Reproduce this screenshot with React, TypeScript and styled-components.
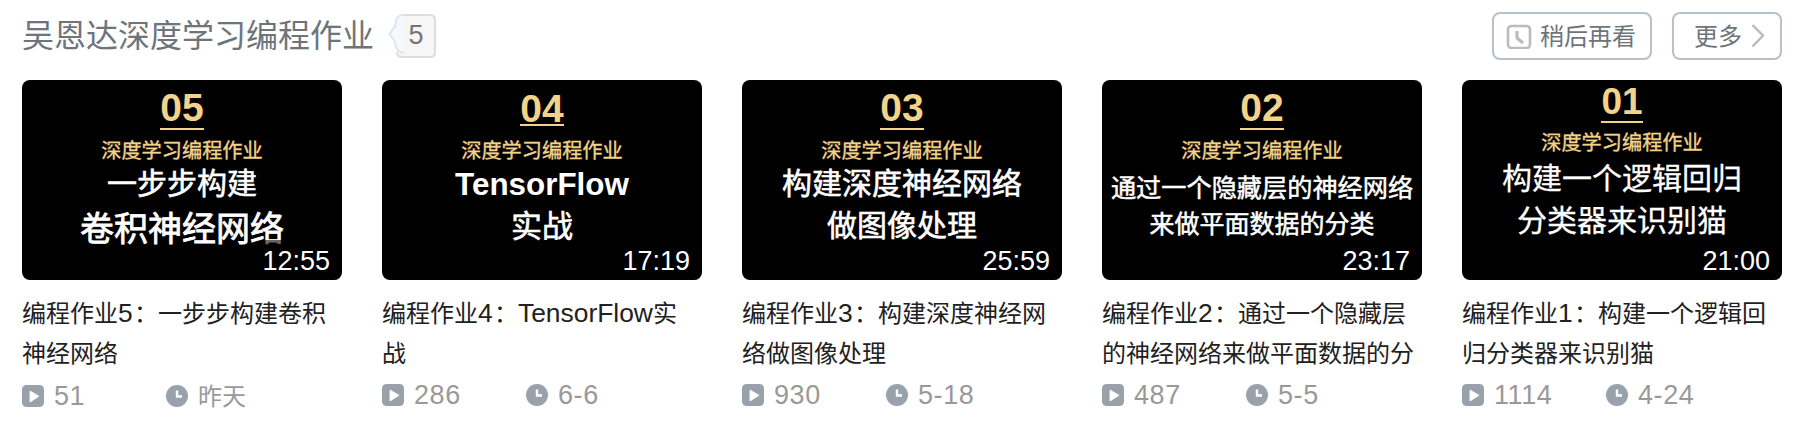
import React from "react";
import styled, { createGlobalStyle } from "styled-components";

const GlobalStyle = createGlobalStyle`
  * { box-sizing: border-box; }
  body {
    margin: 0;
    background: #fff;
    font-family: "Liberation Sans", "Noto Sans CJK SC", sans-serif;
  }
`;

const Page = styled.section`
  width: 1810px;
  height: 430px;
  padding: 12px 28px 0 22px;
  overflow: hidden;
`;

const Header = styled.header`
  display: flex;
  align-items: center;
  height: 48px;
  margin-bottom: 20px;
  color: #6d757a;
`;

const Heading = styled.h2`
  margin: 0;
  font-size: 32px;
  line-height: 48px;
  font-weight: 400;
  white-space: nowrap;
`;

const CountTag = styled.span`
  display: flex;
  position: relative;
  width: 49px;
  height: 44px;
  margin-left: 14px;
  padding: 0 0 2px 7px;
  align-items: center;
  justify-content: center;
  font-size: 27px;
  color: #757575;

  svg {
    position: absolute;
    inset: 0;
  }

  span {
    position: relative;
  }
`;

const Actions = styled.div`
  display: flex;
  gap: 20px;
  margin-left: auto;
`;

const ActionButton = styled.button<{ $width: number; $pad: number; $gap: number }>`
  display: flex;
  align-items: center;
  gap: ${(p) => p.$gap}px;
  width: ${(p) => p.$width}px;
  height: 48px;
  padding: 0 0 0 ${(p) => p.$pad}px;
  border: 2px solid #b8c0cc;
  border-radius: 8px;
  background: #fff;
  color: #6d757a;
  font: inherit;
  font-size: 24px;
  line-height: 44px;
  white-space: nowrap;

  span {
    padding-top: 2px;
  }

  svg {
    flex: none;
  }
`;

const CardRow = styled.div`
  display: grid;
  grid-template-columns: repeat(5, 320px);
  column-gap: 40px;
`;

const Card = styled.article`
  min-width: 0;
`;

const Cover = styled.div`
  position: relative;
  display: flex;
  flex-direction: column;
  align-items: center;
  height: 200px;
  border-radius: 8px;
  overflow: hidden;
  background: #000;
  color: #fff;
  white-space: nowrap;
`;

const Episode = styled.div<{ $size: number; $top: number; $rule: number }>`
  height: ${(p) => p.$rule}px;
  margin-top: ${(p) => p.$top}px;
  border-bottom: 2px solid #f2d38a;
  color: #f2d38a;
  font-size: ${(p) => p.$size}px;
  line-height: 41px;
  font-weight: 700;
`;

const Series = styled.div<{ $top: number }>`
  height: 24px;
  margin-top: ${(p) => p.$top}px;
  color: #f2d38a;
  font-size: 20.2px;
  line-height: 24px;
  -webkit-text-stroke: 0.35px #f2d38a;
`;

const CoverLine = styled.div<{ $size: number; $top: number; $bold?: boolean; $stroke: number }>`
  height: 36px;
  margin-top: ${(p) => p.$top}px;
  font-size: ${(p) => p.$size}px;
  line-height: 36px;
  font-weight: ${(p) => (p.$bold ? 700 : 400)};
  -webkit-text-stroke: ${(p) => p.$stroke}px #fff;
`;

const Duration = styled.span`
  position: absolute;
  right: 0;
  bottom: 0;
  height: 40px;
  padding: 0 12px 0 1px;
  background: rgba(0, 0, 0, 0.6);
  font-size: 27px;
  line-height: 42px;
`;

const Title = styled.h3`
  margin: 14px 0 0;
  color: #212121;
  font-size: 24px;
  line-height: 40px;
  font-weight: 400;
  white-space: nowrap;

  span {
    display: block;
    height: 40px;
  }
`;

const Latin = styled.b`
  font-size: 26.4px;
  font-weight: 400;
  line-height: 1;
`;

const Digit = styled(Latin)`
  letter-spacing: 1.3px;
`;

const Meta = styled.div`
  display: grid;
  grid-template-columns: 144px 1fr;
  height: 44px;
  margin-top: -1px;
  color: #999;
`;

const MetaItem = styled.span`
  display: flex;
  align-items: center;
  gap: 10px;
`;

const MetaText = styled.span<{ $digits?: boolean }>`
  padding-top: ${(p) => (p.$digits ? 0 : 2)}px;
  font-size: ${(p) => (p.$digits ? 27 : 24)}px;
  line-height: 44px;
  letter-spacing: ${(p) => (p.$digits ? 0.6 : 0)}px;
`;

function CountShape() {
  return (
    <svg width="49" height="44" viewBox="0 0 49 44" fill="none">
      <path
        d="M14 1H42Q47 1 47 6V38Q47 43 42 43H14Q9 43 9 38V31L7 25L1 20L7 14L8 7Q9 1 14 1Z"
        fill="#f6f6f6"
      />
      <path d="M16 1H42Q47 1 47 6V38Q47 43 42 43H14Q9 43 9 38" stroke="#ddd" strokeWidth="2" />
      <path
        d="M16 1Q9 1 8 7Q8 12 6 14L1.5 20L6 26Q7 28 7.5 31Q8 38 16 39"
        fill="#f6f9fb"
        stroke="#dfe5ec"
        strokeWidth="2"
      />
    </svg>
  );
}

function WatchLaterIcon() {
  return (
    <svg width="26" height="26" viewBox="0 0 26 26" fill="none" stroke="#bbb" strokeWidth="2.6">
      <rect x="2" y="3" width="22" height="22" rx="3.5" />
      <path d="M11 8V13.5Q11 15 12.2 16L17 20" strokeWidth="3.2" />
    </svg>
  );
}

function ChevronIcon() {
  return (
    <svg width="14" height="24" viewBox="0 0 14 24" fill="none" stroke="#bbb" strokeWidth="2.4">
      <path d="M1.5 1L12 11.5L1.5 22.5" />
    </svg>
  );
}

function PlayIcon() {
  return (
    <svg width="22" height="22" viewBox="0 0 22 22">
      <rect width="22" height="22" rx="4.5" fill="#99a2aa" />
      <path d="M8 6L17 11.3L8 17Z" fill="#fff" stroke="#fff" strokeWidth="0.8" strokeLinejoin="round" />
    </svg>
  );
}

function ClockIcon() {
  return (
    <svg width="22" height="22" viewBox="0 0 22 22" fill="none">
      <circle cx="11" cy="11" r="11" fill="#99a2aa" />
      <path d="M11 5.5V11.5H16" stroke="#fff" strokeWidth="2.4" />
    </svg>
  );
}

type Line = { text: React.ReactNode; size: number; top: number; bold?: boolean; stroke?: number };

type Video = {
  no: string;
  size: number;
  top: number;
  rule: number;
  seriesTop: number;
  lines: Line[];
  duration: string;
  title: React.ReactNode[];
  plays: string;
  date: string;
};

const videos: Video[] = [
  {
    no: "05", size: 39, top: 7, rule: 43, seriesTop: 9,
    lines: [
      { text: "一步步构建", size: 30, top: 3 },
      { text: "卷积神经网络", size: 34, top: 9, stroke: 0.8 },
    ],
    duration: "12:55",
    title: [<>编程作业<Digit>5</Digit>：一步步构建卷积</>, "神经网络"],
    plays: "51", date: "昨天",
  },
  {
    no: "04", size: 39, top: 8, rule: 38, seriesTop: 13,
    lines: [
      { text: "TensorFlow", size: 31.4, top: 4, bold: true, stroke: 0 },
      { text: "实战", size: 31, top: 6 },
    ],
    duration: "17:19",
    title: [<>编程作业<Digit>4</Digit>：<Latin>TensorFlow</Latin>实</>, "战"],
    plays: "286", date: "6-6",
  },
  {
    no: "03", size: 39, top: 7, rule: 43, seriesTop: 9,
    lines: [
      { text: "构建深度神经网络", size: 30, top: 3 },
      { text: "做图像处理", size: 30, top: 6 },
    ],
    duration: "25:59",
    title: [<>编程作业<Digit>3</Digit>：构建深度神经网</>, "络做图像处理"],
    plays: "930", date: "5-18",
  },
  {
    no: "02", size: 39, top: 7, rule: 43, seriesTop: 9,
    lines: [
      { text: "通过一个隐藏层的神经网络", size: 25.2, top: 7, stroke: 0.5 },
      { text: "来做平面数据的分类", size: 25, top: 0, stroke: 0.5 },
    ],
    duration: "23:17",
    title: [<>编程作业<Digit>2</Digit>：通过一个隐藏层</>, "的神经网络来做平面数据的分"],
    plays: "487", date: "5-5",
  },
  {
    no: "01", size: 37, top: 1, rule: 42, seriesTop: 8,
    lines: [
      { text: "构建一个逻辑回归", size: 30, top: 6, stroke: 0.3 },
      { text: "分类器来识别猫", size: 30, top: 6, stroke: 0.3 },
    ],
    duration: "21:00",
    title: [<>编程作业<Digit>1</Digit>：构建一个逻辑回</>, "归分类器来识别猫"],
    plays: "1114", date: "4-24",
  },
];

function VideoCard({ video }: { video: Video }) {
  return (
    <Card>
      <Cover>
        <Episode $size={video.size} $top={video.top} $rule={video.rule}>{video.no}</Episode>
        <Series $top={video.seriesTop}>深度学习编程作业</Series>
        {video.lines.map((line, i) => (
          <CoverLine key={i} $size={line.size} $top={line.top} $bold={line.bold} $stroke={line.stroke ?? 0.6}>
            {line.text}
          </CoverLine>
        ))}
        <Duration>{video.duration}</Duration>
      </Cover>
      <Title>
        {video.title.map((line, i) => (
          <span key={i}>{line}</span>
        ))}
      </Title>
      <Meta>
        <MetaItem><PlayIcon /><MetaText $digits>{video.plays}</MetaText></MetaItem>
        <MetaItem><ClockIcon /><MetaText $digits={/\d/.test(video.date)}>{video.date}</MetaText></MetaItem>
      </Meta>
    </Card>
  );
}

export default function App() {
  return (
    <Page>
      <GlobalStyle />
      <Header>
        <Heading>吴恩达深度学习编程作业</Heading>
        <CountTag><CountShape /><span>5</span></CountTag>
        <Actions>
          <ActionButton $width={160} $pad={12} $gap={8}>
            <WatchLaterIcon />
            <span>稍后再看</span>
          </ActionButton>
          <ActionButton $width={110} $pad={20} $gap={9}>
            <span>更多</span>
            <ChevronIcon />
          </ActionButton>
        </Actions>
      </Header>
      <CardRow>
        {videos.map((video) => (
          <VideoCard key={video.no} video={video} />
        ))}
      </CardRow>
    </Page>
  );
}
